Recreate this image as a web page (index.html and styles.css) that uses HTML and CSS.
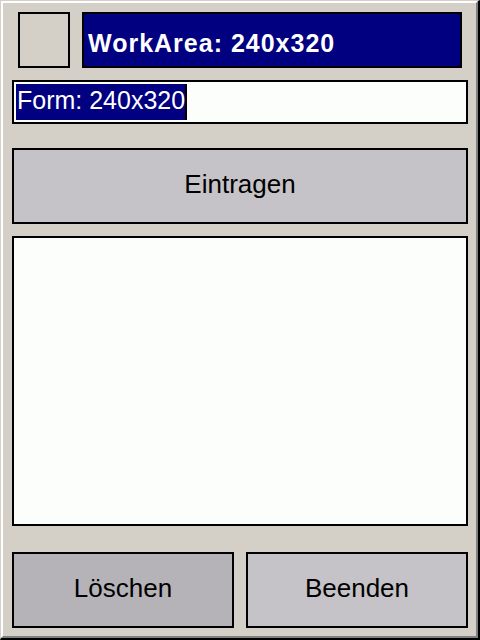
FILE: index.html
```html
<!DOCTYPE html>
<html lang="de">
<head>
    <meta charset="UTF-8">
    <meta name="viewport" content="width=device-width, initial-scale=1.0">
    <title>WorkArea</title>
    <link rel="stylesheet" href="styles.css">
</head>
<body>
    <div class="window">
        <div class="client">
            <div class="top-row">
                <div class="icon-box"></div>
                <div class="title-bar">WorkArea: 240x320</div>
            </div>

            <div class="textbox">
                <span class="selected">Form: 240x320</span><span class="caret"></span>
            </div>

            <button class="btn btn-wide">Eintragen</button>

            <div class="listbox"></div>

            <div class="bottom-row">
                <button class="btn btn-pressed">Löschen</button>
                <button class="btn">Beenden</button>
            </div>
        </div>
    </div>
</body>
</html>
```

FILE: styles.css
```css
* {
    box-sizing: border-box;
}
html, body {
    margin: 0;
    padding: 0;
    background-color: #d4d0c8;
}
body {
    font-family: 'Liberation Sans', Arial, sans-serif;
    color: #000;
}
.window {
    width: 480px;
    height: 640px;
    border-style: solid;
    border-width: 1px 2px 2px 1px;
    border-color: #d4d0c8 #000 #000 #d4d0c8;
}
.client {
    height: 100%;
    border-style: solid;
    border-width: 2px;
    border-color: #fff #808080 #808080 #fff;
    padding: 9px 8px 8px 9px;
    display: flex;
    flex-direction: column;
}
.top-row {
    display: flex;
    gap: 12px;
    margin: 0 6px;
    height: 56px;
}
.icon-box {
    width: 52px;
    border: 2px solid #000;
    background-color: #d4d0c8;
}
.title-bar {
    flex: 1;
    border: 2px solid #000;
    background-color: #000080;
    color: #fff;
    font-weight: bold;
    font-size: 25px;
    letter-spacing: 1px;
    display: flex;
    align-items: center;
    padding: 6px 0 0 4px;
}
.textbox {
    margin-top: 12px;
    height: 44px;
    border: 2px solid #000;
    background-color: #fcfefc;
    padding: 2px;
    display: flex;
    align-items: stretch;
}
.selected {
    background-color: #000080;
    color: #fff;
    font-size: 25px;
    line-height: 32px;
    padding: 0 0 0 1px;
}
.caret {
    width: 2px;
    background-color: #000;
}
.btn {
    font-family: inherit;
    font-size: 26px;
    color: #000;
    background-color: #c5c3c7;
    border: 2px solid #000;
    border-radius: 0;
    height: 76px;
    padding: 0 0 4px 0;
    margin: 0;
}
.btn-wide {
    margin-top: 24px;
    width: 100%;
}
.btn-pressed {
    background-color: #b5b3b7;
}
.listbox {
    margin-top: 12px;
    height: 290px;
    border: 2px solid #000;
    background-color: #fcfefc;
}
.bottom-row {
    margin-top: 26px;
    display: grid;
    grid-template-columns: 1fr 1fr;
    gap: 12px;
}
```
